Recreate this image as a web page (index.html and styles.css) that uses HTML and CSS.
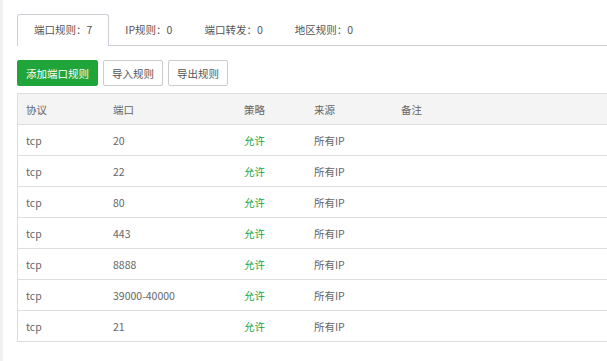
FILE: index.html
```html
<!DOCTYPE html>
<html lang="zh-CN">
<head>
  <meta charset="UTF-8" />
  <title>端口规则</title>
  <link rel="stylesheet" href="styles.css">
</head>
<body>
  <div class="panel">
    <ul class="tabs">
      <li class="tab active">端口规则：7</li>
      <li class="tab">IP规则：0</li>
      <li class="tab">端口转发：0</li>
      <li class="tab">地区规则：0</li>
    </ul>

    <div class="toolbar">
      <button class="btn btn-green">添加端口规则</button>
      <button class="btn">导入规则</button>
      <button class="btn">导出规则</button>
    </div>

    <table class="rules">
      <thead>
        <tr>
          <th class="c-proto">协议</th>
          <th class="c-port">端口</th>
          <th class="c-policy">策略</th>
          <th class="c-src">来源</th>
          <th>备注</th>
        </tr>
      </thead>
      <tbody>
        <tr><td>tcp</td><td>20</td><td class="allow">允许</td><td>所有IP</td><td></td></tr>
        <tr><td>tcp</td><td>22</td><td class="allow">允许</td><td>所有IP</td><td></td></tr>
        <tr><td>tcp</td><td>80</td><td class="allow">允许</td><td>所有IP</td><td></td></tr>
        <tr><td>tcp</td><td>443</td><td class="allow">允许</td><td>所有IP</td><td></td></tr>
        <tr><td>tcp</td><td>8888</td><td class="allow">允许</td><td>所有IP</td><td></td></tr>
        <tr><td>tcp</td><td>39000-40000</td><td class="allow">允许</td><td>所有IP</td><td></td></tr>
        <tr><td>tcp</td><td>21</td><td class="allow">允许</td><td>所有IP</td><td></td></tr>
      </tbody>
    </table>
  </div>
</body>
</html>
```

FILE: styles.css
```css
html, body {
  height: 100%;
}

body {
  margin: 0;
  background: #f0f0f0;
  font-family: "Noto Sans CJK SC", "Noto Sans", sans-serif;
  font-size: 10.5px;
  color: #666;
  overflow: hidden;
}

.panel {
  margin-left: 3px;
  height: 100%;
  background: #fff;
  padding: 14px 0 0 14px;
  box-sizing: border-box;
  overflow: hidden;
}

.tabs {
  display: flex;
  list-style: none;
  margin: 0;
  padding: 0;
  border-bottom: 1px solid #cfcdd8;
  width: 620px;
}

.tab {
  height: 30px;
  line-height: 30px;
  padding: 0 16px 0 16px;
  border: 1px solid transparent;
  border-bottom: none;
  margin-bottom: -1px;
  color: #555;
  white-space: nowrap;
}

.tab + .tab {
  padding: 0 15px;
}

.tab.active {
  border-color: #cfcdd8;
  border-radius: 3px 3px 0 0;
  background: #fff;
  height: 31px;
}

.toolbar {
  display: flex;
  gap: 5px;
  margin-top: 14px;
}

.btn {
  height: 26px;
  padding: 0 8px;
  border: 1px solid #ccc;
  border-radius: 2px;
  background: #fff;
  color: #555;
  font: inherit;
  cursor: pointer;
}

.btn-green {
  background: #20a53a;
  border-color: #20a53a;
  color: #fff;
}

.rules {
  margin-top: 7px;
  width: 620px;
  border-collapse: collapse;
  border: 1px solid #ddd;
}

.rules th,
.rules td {
  height: 30px;
  padding: 0 8px;
  text-align: left;
  font-weight: normal;
  border-bottom: 1px solid #ddd;
  white-space: nowrap;
}

.rules th {
  background: #f4f4f4;
}

.c-proto { width: 71px; }
.c-port { width: 115px; }
.c-policy { width: 54px; }
.c-src { width: 71px; }

.allow {
  color: #20a53a;
}
```
